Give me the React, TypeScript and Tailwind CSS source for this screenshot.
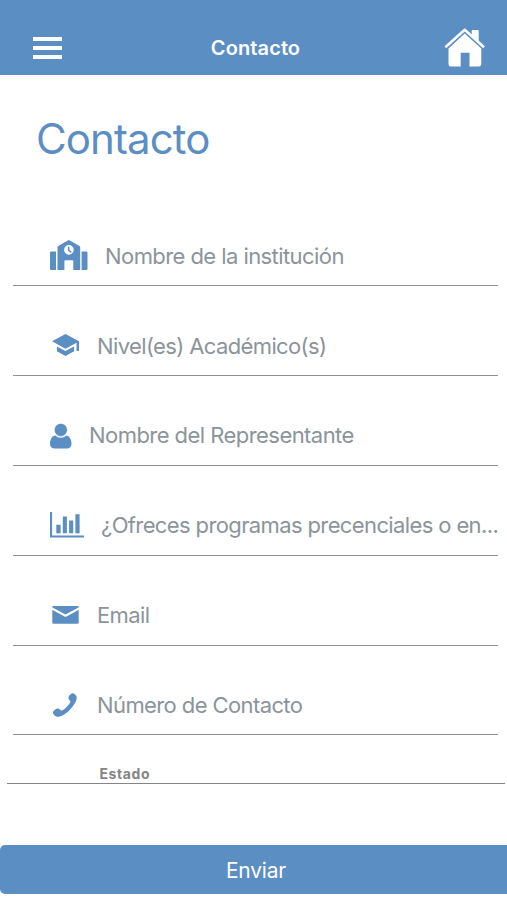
import React from "react";

const SchoolIcon = () => (
	<svg width="38" height="30" viewBox="0 0 38 30" fill="currentColor">
		<path d="M1.2 11.5h4.8V30H1.2Q0 30 0 28.8V12.7q0-1.2 1.2-1.2zM31.6 11.5h4.7q1.2 0 1.2 1.2v16.1q0 1.2-1.2 1.2h-4.7z" />
		<path
			fillRule="evenodd"
			d="M18.2.3q.6-.3 1.2 0l10.1 5.8q.7.4.7 1.2V30h-6.9v-8.8q0-.9-.9-.9h-7.1q-.9 0-.9.9V30H7.5V7.3q0-.8.7-1.2zM18.9 5.1a4.8 4.8 0 1 0 0 9.6 4.8 4.8 0 0 0 0-9.6z"
		/>
		<path d="M18.7 6.8v3.4l2.6 2.2" fill="none" stroke="currentColor" strokeWidth="1.5" />
	</svg>
);

const CapIcon = () => (
	<svg width="27" height="22" viewBox="1 3 22 18" preserveAspectRatio="none" fill="currentColor">
		<path d="M5 13.18v4L12 21l7-3.82v-4L12 17l-7-3.82zM12 3L1 9l11 6 9-4.91V17h2V9L12 3z" />
	</svg>
);

const PersonIcon = () => (
	<svg width="22" height="26" viewBox="0 0 22 26" fill="currentColor">
		<path d="M5.2 12.4C1.9 12.6 0 16.6 0 20.8 0 23.8 1.9 25.6 4.5 25.6h12.5c2.7 0 4.5-1.8 4.5-4.8 0-4.2-1.9-8.2-5.2-8.4a7.5 7.5 0 0 1-11.1 0z" />
		<circle cx="10.8" cy="6.9" r="6.5" stroke="#fff" strokeWidth=".5" />
	</svg>
);

const ChartIcon = () => (
	<svg width="34" height="26" viewBox="0 0 34 26" fill="currentColor">
		<path d="M0 0h2.1v23.4H34v2.1H0zM6.3 12.8h4.3v8.5H6.3zM12.8 4.4h4.1v16.9h-4.1zM19.1 8.6h4.1v12.7h-4.1zM25.4 2.2h4.2v19.1h-4.2z" />
	</svg>
);

const MailIcon = () => (
	<svg width="27" height="18" viewBox="0 0 27 18" fill="currentColor">
		<path d="M1 0h25q1 0 .8.8-.1.6-.7.9L14.4 8.1q-.9.5-1.8 0L.9 1.7Q.3 1.4.2.8 0 0 1 0z" />
		<path d="M.5 4q.1-.1.6.2l11.4 6.3q1 .5 2 0l11.4-6.3q.8-.4.8 0v12.3q0 1.3-1.3 1.3H1.6Q.3 17.8.3 16.5V4.3z" />
	</svg>
);

const PhoneIcon = () => (
	<svg width="24" height="24" viewBox="1.9 0.9 21.9 21.9" preserveAspectRatio="none" fill="currentColor">
		<path d="M14.5 13.4c-2.2 2.2-4.7 4.2-5.7 3.2-1.4-1.4-2.3-2.6-5.4-.1-3.1 2.5-.7 4.2.6 5.5 1.6 1.6 7.4.1 13.2-5.6 5.8-5.8 7.3-11.6 5.7-13.2-1.4-1.4-3-3.7-5.5-.6-2.5 3-1.3 3.9.1 5.3 1 1-.8 3.3-3 5.5z" />
	</svg>
);

const HomeIcon = () => (
	<svg width="42" height="40" viewBox="0 0 42 40" fill="currentColor">
		<path d="M1.4 19.3L20.7 1.8l19.3 17.5" fill="none" stroke="currentColor" strokeWidth="2.5" strokeLinejoin="round" />
		<path d="M27.7 2.7q0-.8.8-.8h5.4q.8 0 .8.8v10.8l-7-6.4z" />
		<path d="M20.7 5.6L37.3 20.5v15.8q0 2.1-2.1 2.1H25.5V24.7h-8.8v13.7H7q-2.5 0-2.5-2.5V20.5z" />
	</svg>
);

interface Field {
	icon: React.ReactNode;
	placeholder: string;
	iconClass: string;
	inputClass: string;
}

const fields: Field[] = [
	{ icon: <SchoolIcon />, placeholder: "Nombre de la institución", iconClass: "pl-[37px]", inputClass: "ml-[17px] pt-px tracking-[-0.57px]" },
	{ icon: <CapIcon />, placeholder: "Nivel(es) Académico(s)", iconClass: "pl-[39px]", inputClass: "ml-[18px] pt-px tracking-[-0.62px]" },
	{ icon: <PersonIcon />, placeholder: "Nombre del Representante", iconClass: "pl-[37px] pt-[2px]", inputClass: "ml-[17px] tracking-[-0.55px]" },
	{ icon: <ChartIcon />, placeholder: "¿Ofreces programas precenciales o en...", iconClass: "pl-[37px] pt-px", inputClass: "ml-[17px] tracking-[-0.62px]" },
	{ icon: <MailIcon />, placeholder: "Email", iconClass: "pl-[38.5px]", inputClass: "ml-[18.5px] tracking-[-0.6px]" },
	{ icon: <PhoneIcon />, placeholder: "Número de Contacto", iconClass: "pl-[40px] pt-px", inputClass: "ml-[20px] pt-px tracking-[-0.6px]" },
];

const App: React.FC = () => {
	return (
		<div className="flex h-[900px] w-full flex-col overflow-hidden bg-white font-['Inter',sans-serif]">
			{/* Header */}
			<header className="grid h-[75px] shrink-0 grid-cols-[1fr_auto_1fr] items-center bg-[#5b8ec3] pt-[21px] pr-[21px] pl-[33px] text-white">
				<button aria-label="Menu" className="flex w-[29px] flex-col gap-[5px]">
					<span className="h-1 bg-white" />
					<span className="h-1 bg-white" />
					<span className="h-1 bg-white" />
				</button>
				<span className="mr-[8px] text-[20px] leading-6 font-semibold tracking-[0.1px]">Contacto</span>
				<button aria-label="Home" className="justify-self-end">
					<HomeIcon />
				</button>
			</header>

			<h1 className="mt-[38px] ml-[36px] text-[42px] leading-[52px] font-normal tracking-[-0.9px] text-[#5b8ec3]">Contacto</h1>

			{/* Form fields */}
			<form className="mt-[31.6px] mr-[9px] ml-[13px]">
				{fields.map((field) => (
					<label key={field.placeholder} className="flex h-[89.8px] items-end border-b border-[#8e9196]">
						<span className={`flex h-[60px] shrink-0 items-center text-[#5b8ec3] ${field.iconClass}`}>{field.icon}</span>
						<input
							placeholder={field.placeholder}
							className={`h-[60px] min-w-0 flex-1 bg-transparent text-[22px] outline-none placeholder:text-[#8b949b] ${field.inputClass}`}
						/>
					</label>
				))}
			</form>

			<div className="mr-[2px] ml-[7px] flex h-[49px] shrink-0 items-end border-b border-[#858585] pl-[92.5px]">
				<span className="text-[14px] leading-[18px] font-bold tracking-[0.6px] text-[#858585]">Estado</span>
			</div>

			<button className="mt-[61px] h-[49px] w-full shrink-0 rounded-l-[5px] bg-[#5b8ec3] pt-px pl-[5px] text-[21px] tracking-[-0.2px] text-white">
				Enviar
			</button>
		</div>
	);
};

export default App;
